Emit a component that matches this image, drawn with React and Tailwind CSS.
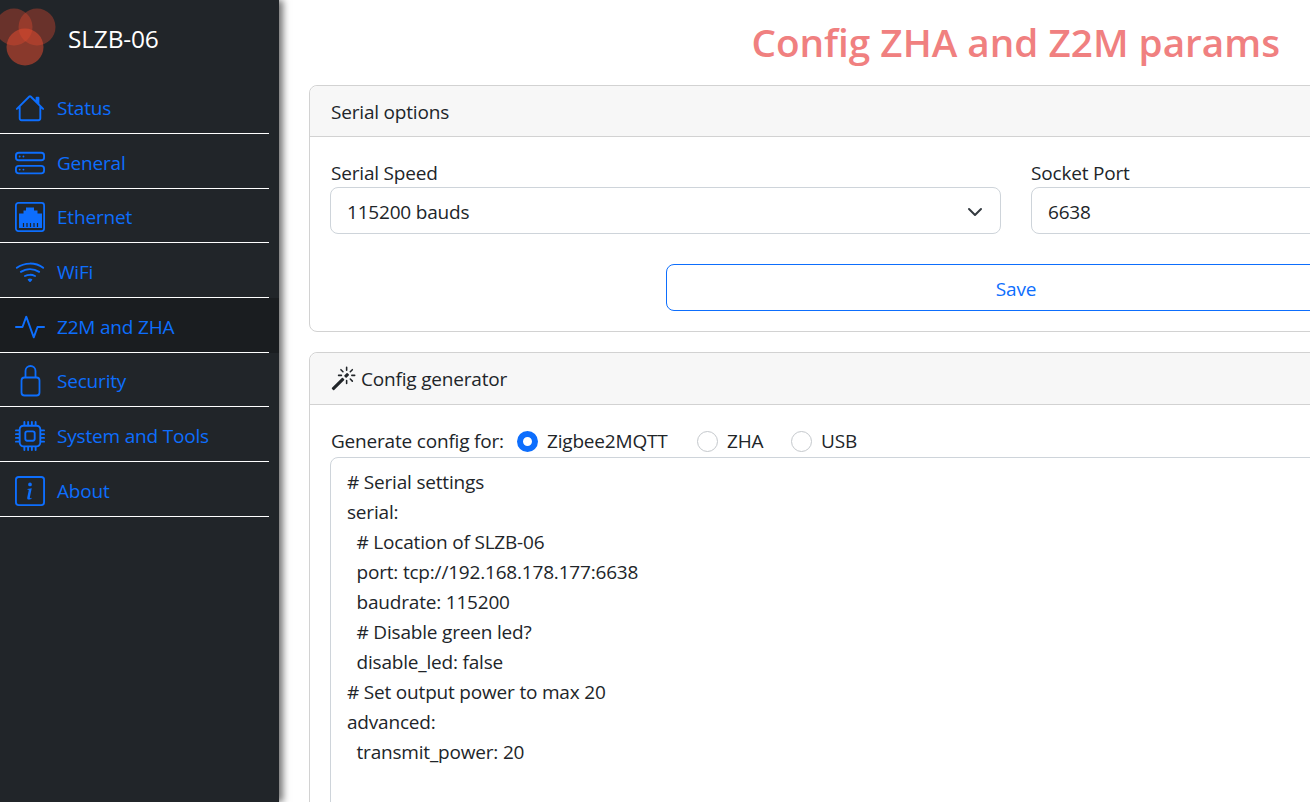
import { BsHouse, BsHddStack, BsWifi, BsActivity, BsCpu, BsInfoSquare, BsMagic } from "react-icons/bs"

const configText = `# Serial settings
serial:
  # Location of SLZB-06
  port: tcp://192.168.178.177:6638
  baudrate: 115200
  # Disable green led?
  disable_led: false
# Set output power to max 20
advanced:
  transmit_power: 20`

function EthernetIcon() {
  return (
    <svg width="30" height="30" viewBox="0 0 30 30" fill="none">
      <rect x="0.9" y="0.9" width="28.2" height="28.2" rx="2.5" stroke="#0d6efd" strokeWidth="1.8" />
      <path d="M11 5.5h8v3h3.5v3H27v14.5H4V11.5h4.500v-3H11z" fill="#0d6efd" />
      <path d="M8.500 21v4M12 21v4M15.500 21v4M19 21v4M22.500 21v4" stroke="#212529" strokeWidth="1.200" />
    </svg>
  )
}

function LockIcon() {
  return (
    <svg width="30" height="32" viewBox="0 0 30 32" fill="none" stroke="#0d6efd" strokeWidth="1.800">
      <rect x="6.500" y="12.500" width="18" height="18" rx="3" />
      <path d="M10.500 12.500V6a5 5 0 0 1 10 0v6.500" />
    </svg>
  )
}

const navItems = [
  { label: "Status", icon: <BsHouse size={30} /> },
  { label: "General", icon: <BsHddStack size={30} /> },
  { label: "Ethernet", icon: <EthernetIcon /> },
  { label: "WiFi", icon: <BsWifi size={30} /> },
  { label: "Z2M and ZHA", icon: <BsActivity size={30} />, active: true },
  { label: "Security", icon: <LockIcon /> },
  { label: "System and Tools", icon: <BsCpu size={30} /> },
  { label: "About", icon: <BsInfoSquare size={30} /> },
]

function Radio({ checked, label }) {
  return (
    <span className="flex items-center gap-[9px]">
      {checked ? (
        <span className="h-[21px] w-[21px] rounded-full border-[6px] border-[#0d6efd] bg-white" />
      ) : (
        <span className="h-[21px] w-[21px] rounded-full border border-[#c4c8cc] bg-white" />
      )}
      <span>{label}</span>
    </span>
  )
}

export default function App() {
  return (
    <div className="flex h-screen overflow-hidden bg-white font-['Open_Sans',sans-serif] text-[19px] leading-[30px] tracking-[-0.01em] text-[#212529]">
      {/* Sidebar */}
      <aside className="relative z-10 h-full w-[279px] shrink-0 bg-[#212529] shadow-[4px_0_7px_rgba(0,0,0,0.55)]">
        <div className="flex h-[79.200px] items-center">
          <svg width="60" height="79" viewBox="0 0 60 79" className="shrink-0">
            <circle cx="14" cy="27" r="18.500" fill="#e04a30" fillOpacity="0.38" />
            <circle cx="37" cy="27" r="18.500" fill="#e04a30" fillOpacity="0.38" />
            <circle cx="25" cy="47" r="18.500" fill="#e04a30" fillOpacity="0.55" />
          </svg>
          <span className="mb-[2px] ml-2 text-[24.500px] text-white">SLZB-06</span>
        </div>
        <nav>
          {navItems.map((item) => (
            <div key={item.label} className={item.active ? "bg-[#1a1d20] pr-[10px]" : "pr-[10px]"}>
              <div className="box-border flex h-[54.700px] items-center gap-3 border-b border-white pl-[15px] pt-1 text-[#0d6efd]">
                <span className="flex w-[30px] justify-center">{item.icon}</span>
                <span>{item.label}</span>
              </div>
            </div>
          ))}
        </nav>
      </aside>

      {/* Main content */}
      <main className="min-w-0 flex-1 overflow-hidden pl-[30px]">
        <div className="w-[1414px]">
          <h1 className="mb-[19px] mt-[18px] w-[971px] text-right text-[38.700px] font-semibold leading-[48px] tracking-normal text-[#f08080]">
            Config ZHA and Z2M params
          </h1>

          <section className="mb-5 rounded-lg border border-[#d2d2d2]">
            <div className="flex h-[51px] items-center rounded-t-lg border-b border-[#d2d2d2] bg-[#f7f7f7] px-[21px] pt-[2px]">
              Serial options
            </div>
            <div className="px-5 pb-5 pt-5">
              <div className="flex gap-[30px]">
                <div className="flex-1">
                  <div className="-mb-px pl-px pt-px">Serial Speed</div>
                  <div className="flex h-[47px] items-center justify-between rounded-lg border border-[#ced4da] pl-4 pr-[17px] pt-[2px]">
                    <span>115200 bauds</span>
                    <svg width="16" height="16" viewBox="0 0 16 16" fill="none" stroke="#343a40" strokeWidth="2" strokeLinecap="round" strokeLinejoin="round">
                      <path d="m2 5 6 6 6-6" />
                    </svg>
                  </div>
                </div>
                <div className="flex-1">
                  <div className="-mb-px pt-px">Socket Port</div>
                  <div className="flex h-[47px] items-center rounded-lg border border-[#ced4da] px-4 pt-[2px]">6638</div>
                </div>
              </div>
              <div className="mt-[30px] flex justify-center">
                <button className="h-[47px] w-[700px] rounded-lg border border-[#0d6efd] pt-[2px] text-[#0d6efd]">Save</button>
              </div>
            </div>
          </section>

          <section className="rounded-lg border border-[#d2d2d2]">
            <div className="flex h-[52px] items-center gap-[5px] rounded-t-lg border-b border-[#d2d2d2] bg-[#f7f7f7] px-[21px]">
              <BsMagic size={25} className="text-[#212529]" />
              <span>Config generator</span>
            </div>
            <div className="px-5 pt-[21px]">
              <div className="flex items-center pl-px">
                <span className="w-[186px]">Generate config for:</span>
                <span className="w-[180px]"><Radio checked label="Zigbee2MQTT" /></span>
                <span className="w-[94px]"><Radio label="ZHA" /></span>
                <Radio label="USB" />
              </div>
              <textarea
                readOnly
                value={configText}
                className="mt-px block h-[480px] w-full resize-none rounded-lg border border-[#ced4da] px-4 py-[9px] outline-none"
              />
            </div>
          </section>
        </div>
      </main>
    </div>
  )
}
